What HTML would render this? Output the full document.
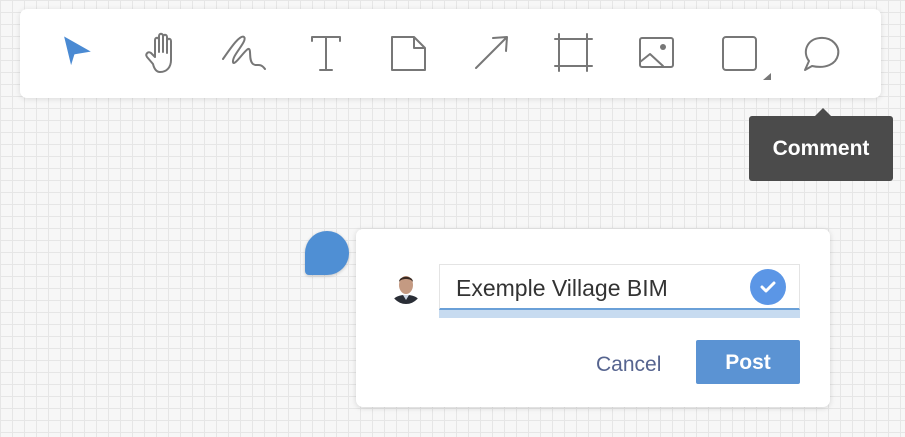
<!DOCTYPE html>
<html><head><meta charset="utf-8"><style>
*{margin:0;padding:0;box-sizing:border-box}
body{width:905px;height:437px;overflow:hidden;font-family:"Liberation Sans","DejaVu Sans",sans-serif;
background-color:#f7f7f7;
background-image:linear-gradient(#e6e6e6 1px,transparent 1px),linear-gradient(90deg,#e6e6e6 1px,transparent 1px);
background-size:12px 12px;position:relative}
.tb{position:absolute;left:20px;top:9px;width:861px;height:89px;background:#fff;border-radius:7px;box-shadow:0 1px 6px rgba(0,0,0,.12)}
.tb svg{position:absolute}
.tip{position:absolute;left:749px;top:116px;width:144px;height:65px;background:#4b4b4b;border-radius:3px;color:#fff;font-weight:bold;font-size:21px;line-height:65px;text-align:center}
.tip:before{content:"";position:absolute;left:66px;top:-8px;border-left:8px solid transparent;border-right:8px solid transparent;border-bottom:8px solid #4b4b4b}
.mark{position:absolute;left:305px;top:231px;width:44px;height:44px;background:#4f8fd4;border-radius:22px 22px 22px 4px;box-shadow:0 1px 3px rgba(0,0,0,.2)}
.card{position:absolute;left:356px;top:229px;width:474px;height:178px;background:#fff;border-radius:7px;box-shadow:0 1px 6px rgba(0,0,0,.15)}
.av{position:absolute;left:390px;top:270px;width:32px;height:34px;border-radius:50%;overflow:hidden;background:#fff}
.inp{position:absolute;left:439px;top:264px;width:361px;height:46px;border:1px solid #e4e4e4;border-bottom:2px solid #6aa0d8;font-size:23px;color:#333;padding-left:16px;line-height:46px}
.band{position:absolute;left:439px;top:310px;width:361px;height:8px;background:#c7dbf0}
.chk{position:absolute;left:750px;top:269px;width:36px;height:36px;border-radius:50%;background:#5b96e6}
.cancel{position:absolute;left:596px;top:353px;font-size:21px;color:#56648f}
.post{position:absolute;left:696px;top:340px;width:104px;height:44px;background:#5b93d3;border-radius:2px;color:#fff;font-size:21px;font-weight:bold;text-align:center;line-height:46px}
</style></head><body>
<div class="tb">
<svg width="861" height="89" viewBox="0 0 861 89" fill="none" stroke="#777" stroke-width="2" stroke-linecap="round" stroke-linejoin="round">
<path d="M43 26 L73 43 L55 46 L51 59 Z" fill="#4a8ad3" stroke="#fff" stroke-width="1.5"/>
<path d="M133 55 L127 48 C125 45 128 42 131 44 L135 48 L135 31 C135 28 139 28 139 31 L139 43 L139 27 C139 24 143 24 143 27 L143 43 L143 28 C143 25 147 25 147 28 L147 44 L147 32 C147 29 151 29 151 32 L151 51 C151 58 147 63 140 63 C136 63 134 59 133 55 Z"/>
<path d="M203 50 C210 40 220 25 224 28 C228 32 212 46 213 53 C214 58 224 42 228 40 C232 39 228 51 233 55 C237 58 240 53 245 60"/>
<path d="M292 28 L320 28 M292 28 L292 32 M320 28 L320 32 M306 28 L306 61 M300 61 L312 61"/>
<path d="M372 28 L394 28 L405 39 L405 61 L372 61 Z M394 28 L394 39 L405 39"/>
<path d="M456 59 L486 29 M473 29 L487 28 L486 42"/>
<path d="M539 25 L539 62 M567 25 L567 62 M535 30 L572 30 M535 57 L572 57"/>
<rect x="620" y="29" width="33" height="29" rx="2"/><path d="M620 53 L630 45 L643 57"/><circle cx="643" cy="38" r="3" fill="#777" stroke="none"/>
<rect x="703" y="28" width="33" height="33" rx="3"/><path d="M743 71 L751 64 L751 71 Z" fill="#777" stroke="none"/>
<path d="M785 61 L789 52 C782 43 787 30 800 29 C812 28 820 37 818 46 C816 55 806 60 792 57 Z"/>
</svg></div>
<div class="tip">Comment</div>
<div class="mark"></div>
<div class="card"></div>
<div class="av"><svg width="32" height="34" viewBox="0 0 32 34"><rect width="32" height="34" fill="#fff"/><path d="M0 34 C4 26 10 25 16 25 C22 25 28 26 32 34Z" fill="#2a2e36"/><path d="M13 25 L16 30 L19 25Z" fill="#cfd8e6"/><ellipse cx="16" cy="15" rx="7" ry="9" fill="#c49a82"/><path d="M9 12 C9 5 23 5 23 12 C21 8 11 8 9 12Z" fill="#3a2a22"/></svg></div>
<div class="inp">Exemple Village BIM</div>
<div class="band"></div>
<div class="chk"><svg width="36" height="36"><path d="M12 18 L16 22 L24 14" stroke="#fff" stroke-width="3" fill="none" stroke-linecap="round" stroke-linejoin="round"/></svg></div>
<div class="cancel">Cancel</div>
<div class="post">Post</div>
</body></html>
